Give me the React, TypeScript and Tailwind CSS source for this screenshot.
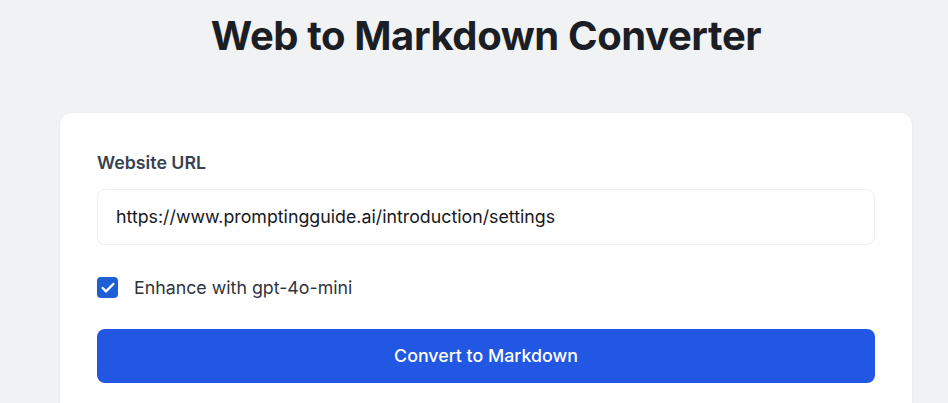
import { Check } from "lucide-react";

export default function App() {
  return (
    <div className="min-h-screen bg-[#f1f2f3] font-['Inter',sans-serif] overflow-hidden">
      <div className="w-[852px] mx-auto ml-[60px] pt-[12px]">
        <h1 className="text-center text-[40px] leading-[48px] font-bold tracking-[-0.01em] text-[#1b1e24]">
          Web to Markdown Converter
        </h1>
        <div className="mt-[53px] bg-white rounded-xl shadow-[0_1px_3px_rgba(0,0,0,0.06)] px-[37px] pt-[38px] pb-10">
          <label className="block text-[17.8px] leading-6 font-semibold text-[#374151]">Website URL</label>
          <div className="mt-[14px] h-[56px] flex items-center px-[18px] rounded-lg border border-[#eef0f2] bg-white">
            <span className="text-[17.8px] text-[#15181d]">https://www.promptingguide.ai/introduction/settings</span>
          </div>
          <div className="mt-[32px] h-[21px] flex items-center gap-[16px]">
            <span className="w-[21px] h-[21px] rounded-[4px] bg-[#1f5fd6] flex items-center justify-center">
              <Check className="w-4 h-4 text-white" strokeWidth={3.5} />
            </span>
            <span className="text-[17.8px] leading-6 text-[#2f343c]">Enhance with gpt-4o-mini</span>
          </div>
          <button className="mt-[31px] w-full h-[54px] rounded-lg bg-[#2257e3] text-white text-[17.8px] font-medium">
            Convert to Markdown
          </button>
        </div>
      </div>
    </div>
  );
}
